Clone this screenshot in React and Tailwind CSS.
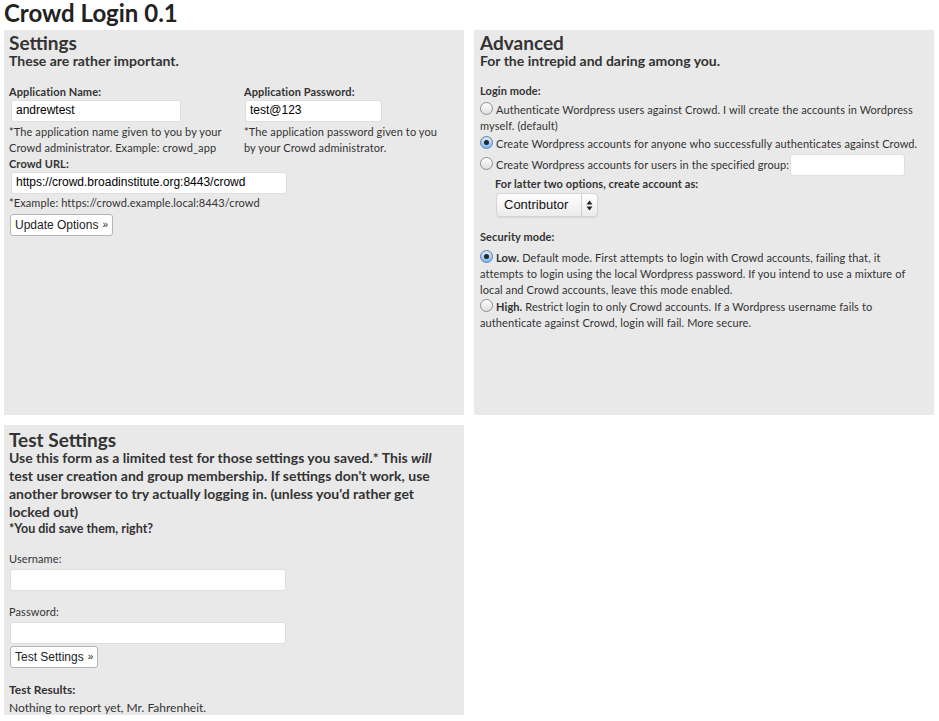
function Radio({ checked }) {
  return (
    <span
      className={`mr-[3px] inline-block h-[13px] w-[13px] rounded-full border align-[-1px] ${
        checked
          ? "border-[#5b7ea8] bg-gradient-to-b from-[#d9eafc] to-[#86b5e8]"
          : "border-[#8f8f8f] bg-gradient-to-b from-white to-[#dedede]"
      }`}
    >
      {checked && <span className="m-[3px] block h-[5px] w-[5px] rounded-full bg-[#1c2a3a]" />}
    </span>
  );
}

function TextInput({ value, width }) {
  return (
    <div
      className={`${width} h-[22px] rounded-[3px] border border-[#dfdfdf] bg-white px-[4px] text-[12px] leading-[19px] tracking-normal text-black [font-family:'Liberation_Sans',Arial,sans-serif]`}
    >
      {value}
    </div>
  );
}

function Button({ children }) {
  return (
    <div className="inline-flex h-[22px] items-center whitespace-nowrap rounded-[3px] border border-[#b5b5b5] bg-white pl-[4px] pr-[4px] text-[12px] tracking-normal text-[#222] [font-family:'Liberation_Sans',Arial,sans-serif]">
      {children}
      <span className="ml-[4px] text-[10px]">»</span>
    </div>
  );
}

export default function App() {
  return (
    <div className="min-h-[721px] bg-white px-[4px] text-[#333] [font-family:Lato,sans-serif]">
      <h1 className="h-[30px] text-[24px] font-bold leading-[26px] text-[#222]">Crowd Login 0.1</h1>

      <div className="grid grid-cols-[460px_460px] gap-[10px]">
        {/* Settings */}
        <div className="h-[385px] bg-[#e9e9e9] px-[5px] pt-[4px]">
          <h2 className="text-[19px] font-bold leading-[18px]">Settings</h2>
          <p className="text-[14px] font-bold leading-[17px]">These are rather important.</p>

          <div className="mt-[15px] flex text-[11px] leading-[16px] tracking-[0.1px]">
            <div className="w-[235px]">
              <div className="font-bold">Application Name:</div>
              <div className="pl-[2px]">
                <TextInput value="andrewtest" width="w-[170px]" />
              </div>
              <p className="mt-[2px]">
                *The application name given to you by your Crowd administrator. Example: crowd_app
              </p>
            </div>
            <div className="w-[200px]">
              <div className="font-bold">Application Password:</div>
              <div className="pl-[1px]">
                <TextInput value="test@123" width="w-[137px]" />
              </div>
              <p className="mt-[2px]">*The application password given to you by your Crowd administrator.</p>
            </div>
          </div>

          <div className="text-[11px] leading-[16px] tracking-[0.1px]">
            <div className="font-bold">Crowd URL:</div>
            <div className="pl-[2px]">
              <TextInput value="https://crowd.broadinstitute.org:8443/crowd" width="w-[276px]" />
            </div>
            <p className="mt-[1px]">*Example: https://crowd.example.local:8443/crowd</p>
            <div className="mt-[3px] pl-[1px]">
              <Button>Update Options</Button>
            </div>
          </div>
        </div>

        {/* Advanced */}
        <div className="h-[385px] bg-[#e9e9e9] pl-[6px] pr-[12px] pt-[4px]">
          <h2 className="text-[19px] font-bold leading-[18px]">Advanced</h2>
          <p className="text-[14px] font-bold leading-[17px]">For the intrepid and daring among you.</p>

          <div className="mt-[14px] text-[11px] leading-[16px] tracking-[0.1px]">
            <div className="font-bold">Login mode:</div>
            <div className="mt-[3px]">
              <Radio />
              Authenticate Wordpress users against Crowd. I will create the accounts in Wordpress myself. (default)
            </div>
            <div className="mt-[2px]">
              <Radio checked />
              Create Wordpress accounts for anyone who successfully authenticates against Crowd.
            </div>
            <div className="mt-[2px] flex h-[22px] items-center">
              <span>
                <Radio />
                Create Wordpress accounts for users in the specified group:
              </span>
              <div className="ml-[1px]">
                <TextInput value="" width="w-[115px]" />
              </div>
            </div>
            <div className="ml-[15px] font-bold">For latter two options, create account as:</div>
            <div className="ml-[16px] mt-[1px]">
              <div className="flex h-[24px] w-[102px] items-center rounded-[4px] border border-[#d4d4d4] bg-gradient-to-b from-white to-[#ebebeb] text-[13px] tracking-normal text-[#111] shadow-[0_1px_1px_rgba(0,0,0,0.08)] [font-family:'Liberation_Sans',Arial,sans-serif]">
                <span className="flex-1 pl-[7px]">Contributor</span>
                <span className="flex h-full w-[16px] items-center justify-center border-l border-[#d0d0d0]">
                  <svg width="7" height="11" viewBox="0 0 7 11" fill="#222">
                    <polygon points="0.5,4.5 3.5,0.5 6.5,4.5" />
                    <polygon points="0.5,6.5 3.5,10.5 6.5,6.5" />
                  </svg>
                </span>
              </div>
            </div>

            <div className="mt-[12px] font-bold">Security mode:</div>
            <div className="mt-[5px]">
              <Radio checked />
              <b>Low.</b> Default mode. First attempts to login with Crowd accounts, failing that, it attempts to login
              using the local Wordpress password. If you intend to use a mixture of local and Crowd accounts, leave
              this mode enabled.
            </div>
            <div className="mt-[1px]">
              <Radio />
              <b>High.</b> Restrict login to only Crowd accounts. If a Wordpress username fails to authenticate
              against Crowd, login will fail. More secure.
            </div>
          </div>
        </div>

        {/* Test Settings */}
        <div className="h-[290px] bg-[#e9e9e9] px-[5px] pt-[6px]">
          <h2 className="text-[19px] font-bold leading-[18px]">Test Settings</h2>
          <p className="w-[435px] text-[14px] font-bold leading-[18px]">
            Use this form as a limited test for those settings you saved.* This <i>will</i> test user creation and
            group membership. If settings don't work, use another browser to try actually logging in. (unless you'd
            rather get locked out)
          </p>
          <p className="text-[12.5px] font-bold leading-[16px]">*You did save them, right?</p>

          <div className="mt-[14px] text-[11px] leading-[16px] tracking-[0.1px]">
            <div>Username:</div>
            <div className="mt-[2px] pl-[1px]">
              <TextInput value="" width="w-[276px]" />
            </div>
            <div className="mt-[13px]">Password:</div>
            <div className="mt-[2px] pl-[1px]">
              <TextInput value="" width="w-[276px]" />
            </div>
            <div className="mt-[2px] pl-[1px]">
              <Button>Test Settings</Button>
            </div>
          </div>
          <div className="mt-[14px] text-[12px] leading-[16px]">
            <div className="font-bold">Test Results:</div>
            <div className="mt-[2px]">Nothing to report yet, Mr. Fahrenheit.</div>
          </div>
        </div>
      </div>
    </div>
  );
}
